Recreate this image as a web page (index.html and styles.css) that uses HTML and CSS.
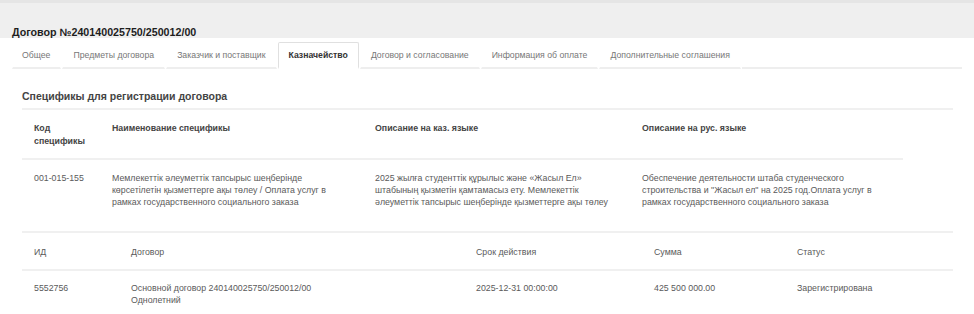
FILE: index.html
```html
<!DOCTYPE html>
<html lang="ru">
<head>
    <meta charset="UTF-8">
    <meta name="viewport" content="width=device-width, initial-scale=1.0">
    <title>Договор №240140025750/250012/00</title>
    <link rel="stylesheet" href="styles.css">
</head>
<body>

<div class="topbar">
    <h1 class="contract-title">Договор №240140025750/250012/00</h1>
</div>

<div class="page">
    <ul class="tabs">
        <li class="tab">Общее</li>
        <li class="tab">Предметы договора</li>
        <li class="tab">Заказчик и поставщик</li>
        <li class="tab active">Казначейство</li>
        <li class="tab">Договор и согласование</li>
        <li class="tab">Информация об оплате</li>
        <li class="tab">Дополнительные соглашения</li>
        <li class="tab-rest"></li>
    </ul>

    <section class="panel">
        <h2 class="panel-title">Спецификы для регистрации договора</h2>

        <div class="block">
            <table class="spec-table">
                <colgroup>
                    <col class="c-code">
                    <col class="c-name">
                    <col class="c-kaz">
                    <col class="c-rus">
                </colgroup>
                <thead>
                    <tr>
                        <th>Код спецификы</th>
                        <th>Наименование спецификы</th>
                        <th>Описание на каз. языке</th>
                        <th>Описание на рус. языке</th>
                    </tr>
                </thead>
                <tbody>
                    <tr>
                        <td>001-015-155</td>
                        <td>Мемлекеттік әлеуметтік тапсырыс шеңберінде көрсетілетін қызметтерге ақы төлеу / Оплата услуг в рамках государственного социального заказа</td>
                        <td>2025 жылға студенттік құрылыс және «Жасыл Ел» штабының қызметін қамтамасыз ету. Мемлекеттік әлеуметтік тапсырыс шеңберінде қызметтерге ақы төлеу</td>
                        <td>Обеспечение деятельности штаба студенческого строительства и "Жасыл ел" на 2025 год.Оплата услуг в рамках государственного социального заказа</td>
                    </tr>
                </tbody>
            </table>
        </div>

        <div class="block">
            <table class="docs-table">
                <colgroup>
                    <col class="c-id">
                    <col class="c-doc">
                    <col class="c-term">
                    <col class="c-sum">
                    <col class="c-status">
                </colgroup>
                <thead>
                    <tr>
                        <th>ИД</th>
                        <th>Договор</th>
                        <th>Срок действия</th>
                        <th>Сумма</th>
                        <th>Статус</th>
                    </tr>
                </thead>
                <tbody>
                    <tr>
                        <td>5552756</td>
                        <td>Основной договор 240140025750/250012/00<br>Однолетний</td>
                        <td>2025-12-31 00:00:00</td>
                        <td>425 500 000.00</td>
                        <td>Зарегистрирована</td>
                    </tr>
                </tbody>
            </table>
        </div>
    </section>
</div>

</body>
</html>
```

FILE: styles.css
```css
body {
    font-family: 'Liberation Sans', Arial, sans-serif;
    margin: 0;
    background-color: #fff;
    color: #5a5a5a;
}

.topbar {
    height: 38px;
    box-sizing: border-box;
    background-color: #efefef;
    border-top: 3px solid #e5e5e5;
    padding: 0 12px;
    display: flex;
    align-items: flex-end;
}

.contract-title {
    margin: 0;
    font-size: 10.7px;
    line-height: 12px;
    font-weight: bold;
    color: #1e1e1e;
}

.page {
    padding: 0 12px;
}

.tabs {
    list-style: none;
    margin: 4px 0 0 0;
    padding: 0;
    display: flex;
    gap: 1px;
}

.tab {
    height: 24px;
    padding: 0 10px;
    display: flex;
    align-items: center;
    font-size: 8.7px;
    color: #777;
    border-top: 1px solid transparent;
    border-left: 1px solid transparent;
    border-right: 1px solid transparent;
    border-bottom: 2px solid #eee;
}

.tab:first-child {
    padding-left: 9px;
}

.tab.active {
    color: #333;
    font-weight: bold;
    border-color: #e0e0e0;
    border-bottom-color: #fff;
    border-radius: 2px 2px 0 0;
}

.tab-rest {
    flex: 1;
    border-bottom: 2px solid #eee;
}

.panel {
    padding: 0 9px 0 10px;
}

.panel-title {
    margin: 20px 0 5px 0;
    font-size: 10.5px;
    line-height: 14px;
    font-weight: bold;
    color: #444;
}

.block {
    border-top: 2px solid #f0f0f0;
}

table {
    border-collapse: collapse;
    table-layout: fixed;
    font-size: 8.8px;
    line-height: 12px;
}

th, td {
    text-align: left;
    vertical-align: top;
    padding: 0 12px;
}

.spec-table {
    width: 881px;
}

.spec-table th {
    padding-top: 12px;
    padding-bottom: 10px;
    line-height: 13px;
    font-weight: bold;
    color: #444;
    border-bottom: 2px solid #f0f0f0;
}

.spec-table td {
    padding-top: 12px;
    padding-bottom: 23px;
}

.c-code { width: 78px; }
.c-name { width: 263px; }
.c-kaz { width: 267px; }
.c-rus { width: 273px; }

.docs-table {
    width: 100%;
}

.docs-table th {
    padding-top: 13px;
    padding-bottom: 11px;
    font-weight: normal;
    border-bottom: 2px solid #f0f0f0;
}

.docs-table td {
    padding-top: 11px;
    padding-bottom: 12px;
}

.c-id { width: 97px; }
.c-doc { width: 345px; }
.c-term { width: 178px; }
.c-sum { width: 143px; }
```
